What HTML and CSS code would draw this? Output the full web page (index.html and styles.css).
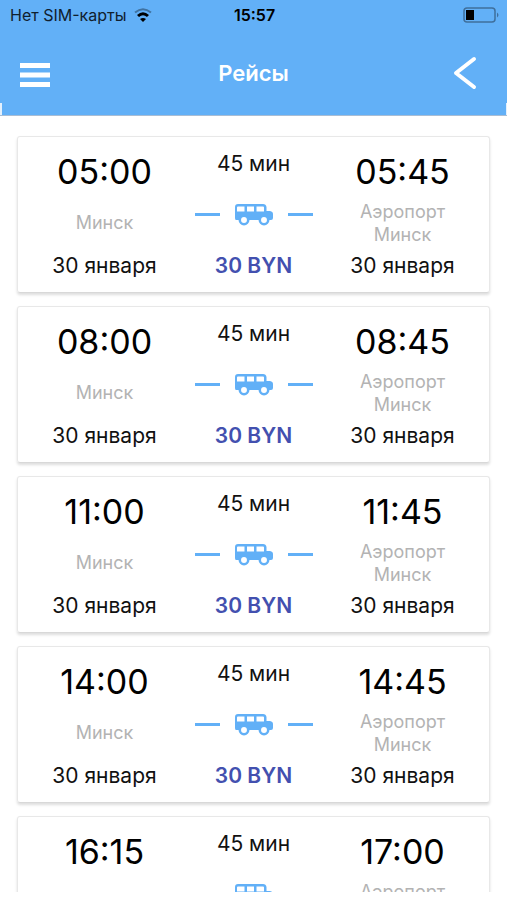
FILE: index.html
```html
<!DOCTYPE html>
<html lang="ru">
	<head>
		<meta charset="utf-8">
		<meta name="viewport" content="width=device-width, initial-scale=1">
		<title>Рейсы</title>
		<link rel="stylesheet" href="styles.css">
	</head>
	<body>
		<svg class="sprite" aria-hidden="true">
			<symbol id="bus" viewBox="0 0 38 22">
				<path fill-rule="evenodd" d="M3 0H28Q31 0 31.500 3V7H35Q38 7.500 38 10V14Q38 16 36 16H1Q0 16 0 14V3Q0 0 3 0ZM3 2.500Q2 2.500 2 3.500V7.500H9.500V2.500ZM12 2.500V7.500H19V2.500ZM21.500 2.500V7.500H29V3.500Q29 2.500 28 2.500Z"/>
				<circle class="wheel" cx="9" cy="16" r="4.200"/>
				<circle class="wheel" cx="29" cy="16" r="4.200"/>
			</symbol>
		</svg>

		<div class="screen">
			<header class="header">
				<div class="status">
					<span class="carrier">Нет SIM-карты
						<svg class="wifi" viewBox="0 0 18 14">
							<path d="M1 4.500Q9 -2 17 4.500" stroke-width="2" stroke-opacity="0.35"/>
							<path d="M4 8Q9 3.500 14 8"/>
							<path d="M9 14L6 11Q9 9 12 11Z" fill="#000" stroke="none"/>
						</svg>
					</span>
					<span class="clock">15:57</span>
					<svg class="battery" viewBox="0 0 36 16">
						<rect x="1" y="1" width="31" height="14" rx="3"/>
						<rect x="3" y="3" width="8" height="10" fill="#000" stroke="none"/>
						<path d="M34 5.500Q37 8 34 10.500Z" fill="#3f6f9c" stroke="none"/>
					</svg>
				</div>
				<div class="bar">
					<button class="icon-btn" aria-label="Меню">
						<svg width="30" height="28" viewBox="0 0 30 28"><path d="M0 6.500H30M0 16H30M0 25.500H30" stroke="#fff" stroke-width="5"/></svg>
					</button>
					<h1>Рейсы</h1>
					<button class="icon-btn back" aria-label="Назад">
						<svg width="24" height="34" viewBox="0 0 24 34"><path d="M21 3L3 17L21 31" fill="none" stroke="#fff" stroke-width="4" stroke-linecap="round" stroke-linejoin="round"/></svg>
					</button>
				</div>
			</header>

			<main class="list">
				<article class="card">
					<div class="point">
						<time class="time">05:00</time>
						<span class="place">Минск</span>
						<span class="date">30 января</span>
					</div>
					<div class="route">
						<span class="duration">45 мин</span>
						<span class="way"><svg class="bus"><use href="#bus"/></svg></span>
						<span class="price">30 BYN</span>
					</div>
					<div class="point">
						<time class="time">05:45</time>
						<span class="place">Аэропорт Минск</span>
						<span class="date">30 января</span>
					</div>
				</article>

				<article class="card">
					<div class="point">
						<time class="time">08:00</time>
						<span class="place">Минск</span>
						<span class="date">30 января</span>
					</div>
					<div class="route">
						<span class="duration">45 мин</span>
						<span class="way"><svg class="bus"><use href="#bus"/></svg></span>
						<span class="price">30 BYN</span>
					</div>
					<div class="point">
						<time class="time">08:45</time>
						<span class="place">Аэропорт Минск</span>
						<span class="date">30 января</span>
					</div>
				</article>

				<article class="card">
					<div class="point">
						<time class="time">11:00</time>
						<span class="place">Минск</span>
						<span class="date">30 января</span>
					</div>
					<div class="route">
						<span class="duration">45 мин</span>
						<span class="way"><svg class="bus"><use href="#bus"/></svg></span>
						<span class="price">30 BYN</span>
					</div>
					<div class="point">
						<time class="time">11:45</time>
						<span class="place">Аэропорт Минск</span>
						<span class="date">30 января</span>
					</div>
				</article>

				<article class="card">
					<div class="point">
						<time class="time">14:00</time>
						<span class="place">Минск</span>
						<span class="date">30 января</span>
					</div>
					<div class="route">
						<span class="duration">45 мин</span>
						<span class="way"><svg class="bus"><use href="#bus"/></svg></span>
						<span class="price">30 BYN</span>
					</div>
					<div class="point">
						<time class="time">14:45</time>
						<span class="place">Аэропорт Минск</span>
						<span class="date">30 января</span>
					</div>
				</article>

				<article class="card">
					<div class="point">
						<time class="time">16:15</time>
						<span class="place">Минск</span>
						<span class="date">30 января</span>
					</div>
					<div class="route">
						<span class="duration">45 мин</span>
						<span class="way"><svg class="bus"><use href="#bus"/></svg></span>
						<span class="price">30 BYN</span>
					</div>
					<div class="point">
						<time class="time">17:00</time>
						<span class="place">Аэропорт Минск</span>
						<span class="date">30 января</span>
					</div>
				</article>
			</main>
		</div>
	</body>
</html>
```
FILE: styles.css
```css
*{
	box-sizing: border-box;
}
body{
	margin: 0;
	background: #fff;
	color: #111;
	font-family: Inter, Roboto, sans-serif;
}
.sprite{
	position: absolute;
	width: 0;
	height: 0;
}
.screen{
	display: flex;
	flex-direction: column;
	height: calc(100vh - 8px);
	overflow: hidden;
}

/* header, with a thin light notch in both bottom corners */
.header{
	flex: none;
	background:
		linear-gradient(#e4f0fc, #e4f0fc) left bottom / 2px 12px no-repeat,
		linear-gradient(#e4f0fc, #e4f0fc) right bottom / 1px 12px no-repeat,
		#62b0f7;
	border-bottom: 1px solid #a9bdd4;
}
.status{
	display: grid;
	grid-template-columns: 1fr auto 1fr;
	align-items: center;
	height: 30px;
	padding: 0 8px 0 10px;
	font-size: 16px;
	color: #10202e;
}
.carrier{
	display: flex;
	align-items: center;
	gap: 8px;
	white-space: nowrap;
}
.clock{
	font-weight: 600;
	color: #000;
}
.wifi{
	width: 18px;
	height: 14px;
	fill: none;
	stroke: #000;
	stroke-width: 3;
}
.battery{
	justify-self: end;
	width: 36px;
	height: 16px;
	fill: none;
	stroke: #3f6f9c;
	stroke-width: 1.5;
}
.bar{
	display: grid;
	grid-template-columns: 1fr auto 1fr;
	align-items: center;
	height: 85px;
	padding: 0 20px;
}
h1{
	margin: 0;
	font-size: 22px;
	font-weight: 600;
	color: #fff;
}
.icon-btn{
	display: flex;
	justify-self: start;
	padding: 0;
	border: none;
	background: none;
}
.icon-btn.back{
	justify-self: end;
	padding-right: 10px;
}

/* trips */
.list{
	display: flex;
	flex-direction: column;
	gap: 13px;
	padding: 20px 17px;
}
.card{
	flex: none;
	display: grid;
	grid-template-columns: repeat(3, 1fr);
	padding: 12px 12px 10px;
	border: 1px solid #e8e8e8;
	border-bottom-color: #d8d8d8;
	border-radius: 3px;
	box-shadow: 0 2px 3px #0002;
	text-align: center;
	font-size: 21px;
	line-height: 32px;
}
.point, .route{
	display: flex;
	flex-direction: column;
	align-items: center;
}
.time{
	font-size: 34px;
	line-height: 46px;
	color: #000;
}
.place{
	display: flex;
	align-items: center;
	width: min-content;
	height: 55px;
	font-size: 18px;
	line-height: 23px;
	color: #b3b3b3;
}
.duration{
	line-height: 30px;
}
.way{
	display: flex;
	align-items: center;
	gap: 15px;
	height: 71px;
}
.way::before, .way::after{
	content: "";
	width: 25px;
	height: 3px;
	background: #62b0f7;
}
.bus{
	width: 38px;
	height: 22px;
	fill: #62b0f7;
}
.wheel{
	fill: #fff;
	stroke: #62b0f7;
	stroke-width: 2.5;
}
.price{
	font-weight: 600;
	color: #4350af;
}
```
